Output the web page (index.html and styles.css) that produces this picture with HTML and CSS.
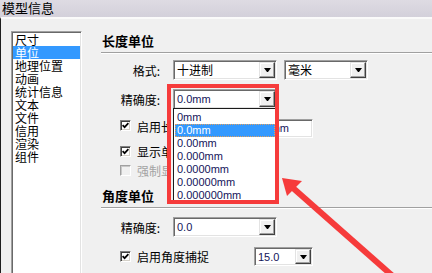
FILE: index.html
```html
<!DOCTYPE html>
<html lang="zh-CN">
<head>
  <meta charset="UTF-8">
  <meta name="viewport" content="width=device-width, initial-scale=1.0">
  <title>模型信息</title>
  <link rel="stylesheet" href="styles.css">
</head>
<body>
  <div class="titlebar">模型信息</div>
  <div class="dialog">
    <div class="sidebar">
      <ul class="navlist">
        <li>尺寸</li>
        <li class="active">单位</li>
        <li>地理位置</li>
        <li>动画</li>
        <li>统计信息</li>
        <li>文本</li>
        <li>文件</li>
        <li>信用</li>
        <li>渲染</li>
        <li>组件</li>
      </ul>
    </div>

    <div class="main">
      <h2 class="section-title">长度单位</h2>
      <div class="form-row row-format">
        <label class="field-label">格式:</label>
        <div class="combo combo-wide"><span class="combo-value">十进制</span><span class="combo-btn"></span></div>
        <div class="combo combo-unit"><span class="combo-value">毫米</span><span class="combo-btn"></span></div>
      </div>
      <div class="form-row row-precision">
        <label class="field-label">精确度:</label>
        <div class="combo combo-wide">
          <span class="combo-value latin">0.0mm</span><span class="combo-btn"></span>
          <ul class="dropdown latin">
            <li>0mm</li>
            <li class="selected">0.0mm</li>
            <li>0.00mm</li>
            <li>0.000mm</li>
            <li>0.0000mm</li>
            <li>0.00000mm</li>
            <li>0.000000mm</li>
          </ul>
        </div>
      </div>
      <div class="check-row row-snap">
        <span class="checkbox checked"><svg width="7" height="7" viewBox="0 0 7 7"><polyline points="0.6,3.2 2.6,5.2 6.4,1.2" fill="none" stroke="#000" stroke-width="1.7"/></svg></span>
        <span class="check-text covered">启用长度捕捉</span>
        <div class="textbox latin"><span class="textbox-value">mm</span></div>
      </div>
      <div class="check-row row-suffix">
        <span class="checkbox checked"><svg width="7" height="7" viewBox="0 0 7 7"><polyline points="0.6,3.2 2.6,5.2 6.4,1.2" fill="none" stroke="#000" stroke-width="1.7"/></svg></span>
        <span class="check-text covered">显示单位格式</span>
      </div>
      <div class="check-row row-force">
        <span class="checkbox disabled"></span>
        <span class="check-text covered disabled-text">强制显示单位</span>
      </div>

      <h2 class="section-title section-angle">角度单位</h2>
      <div class="form-row row-angle">
        <label class="field-label">精确度:</label>
        <div class="combo combo-wide"><span class="combo-value latin">0.0</span><span class="combo-btn"></span></div>
      </div>
      <div class="check-row row-angle-snap">
        <span class="checkbox checked"><svg width="7" height="7" viewBox="0 0 7 7"><polyline points="0.6,3.2 2.6,5.2 6.4,1.2" fill="none" stroke="#000" stroke-width="1.7"/></svg></span>
        <span class="check-text">启用角度捕捉</span>
        <div class="combo combo-small"><span class="combo-value latin">15.0</span><span class="combo-btn"></span></div>
      </div>
    </div>
  </div>

  <!-- 标注 -->
  <div class="callout-box"></div>
  <svg class="callout-arrow" width="432" height="273" viewBox="0 0 432 273">
    <line x1="293" y1="188" x2="404" y2="286" stroke="#f63b3b" stroke-width="6"/>
    <polygon points="282,178 302,181 287,196" fill="#f63b3b"/>
  </svg>
</body>
</html>
```

FILE: styles.css
```css
* {
  margin: 0;
  padding: 0;
  box-sizing: border-box;
}

body {
  width: 432px;
  height: 273px;
  overflow: hidden;
  position: relative;
  background: #f0f0f0;
  font-family: "Noto Sans CJK SC", "Liberation Sans", sans-serif;
  font-size: 12px;
  color: #000;
}

.titlebar {
  height: 17px;
  padding-left: 2px;
  font-size: 13px;
  line-height: 15px;
  background: linear-gradient(#dedbe3, #d3d0da);
}

.dialog {
  display: flex;
  height: 256px;
  border-top: 2px solid #fafafa;
  border-left: 1px solid #1e1e1e;
}

.sidebar {
  width: 81px;
  padding: 12px 0 0 10px;
}

.navlist {
  list-style: none;
  width: 71px;
  height: 260px;
  padding: 1px;
  background: #fff;
  border: 1px solid;
  border-color: #a0a0a0 #fff #fff #a0a0a0;
  box-shadow: inset 1px 1px 0 #696969, inset -1px -1px 0 #e3e3e3;
}

.navlist li {
  height: 13px;
  line-height: 13px;
  padding-left: 2px;
}

.navlist li.active {
  background: #3399ff;
  color: #fff;
}

.main {
  flex: 1;
  padding: 14px 0 0 19px;
}

.section-title {
  font-size: 13px;
  font-weight: bold;
  line-height: 16px;
  padding: 0 0 3px 1px;
  border-bottom: 1px solid #a0a0a0;
  box-shadow: 0 1px 0 #fff;
}

.section-angle {
  margin-top: 10px;
}

.latin {
  font-family: "Liberation Sans", Arial, sans-serif;
  font-size: 11px;
  color: #14145a;
}

.form-row {
  display: flex;
  align-items: center;
  height: 20px;
}

.row-format {
  margin-top: 7px;
}

.row-precision,
.row-angle {
  margin-top: 9px;
}

.field-label {
  width: 59px;
  margin-right: 13px;
  text-align: right;
}

.combo {
  position: relative;
  display: flex;
  align-items: center;
  height: 20px;
  padding-left: 3px;
  background: #fff;
  border: 1px solid;
  border-color: #a0a0a0 #fff #fff #a0a0a0;
  box-shadow: inset 1px 1px 0 #696969, inset -1px -1px 0 #e3e3e3;
}

.combo-wide {
  width: 104px;
}

.combo-unit {
  width: 84px;
  margin-left: 7px;
}

.combo-small {
  width: 59px;
  height: 19px;
}

.combo-value {
  flex: 1;
  line-height: 14px;
}

.combo-btn {
  width: 16px;
  height: 16px;
  margin-right: 1px;
  display: flex;
  align-items: center;
  justify-content: center;
  background: #f0f0f0;
  border: 1px solid;
  border-color: #e3e3e3 #404040 #404040 #e3e3e3;
  box-shadow: inset -1px -1px 0 #a0a0a0, inset 1px 1px 0 #fff;
}

.combo-small .combo-btn {
  height: 15px;
}

.combo-btn::after {
  content: '';
  width: 1px;
  height: 0;
  border-left: 3px solid transparent;
  border-right: 3px solid transparent;
  border-top: 4px solid #000;
}

.dropdown {
  position: absolute;
  top: 100%;
  left: -1px;
  right: -1px;
  z-index: 2;
  list-style: none;
  padding: 2px 1px 0;
  background: #fff;
  border: 1px solid #1a1a1a;
}

.dropdown li {
  height: 13px;
  line-height: 13px;
  padding-left: 2px;
}

.dropdown li.selected {
  background: #3399ff;
  color: #fff;
  outline: 1px dotted #e0a060;
  outline-offset: -1px;
}

.check-row {
  display: flex;
  align-items: center;
  height: 15px;
  padding-left: 19px;
}

.row-snap {
  margin-top: 10px;
  height: 20px;
  align-items: flex-start;
}

.row-snap .checkbox {
  margin-top: 1px;
}

.row-suffix {
  margin-top: 5px;
}

.row-force {
  margin-top: 4px;
}

.row-angle-snap {
  margin-top: 10px;
  height: 19px;
}

.checkbox {
  width: 11px;
  height: 11px;
  margin-right: 6px;
  display: flex;
  align-items: center;
  justify-content: center;
  background: #fff;
  border: 1px solid;
  border-color: #808080 #fff #fff #808080;
  box-shadow: inset 1px 1px 0 #404040, inset -1px -1px 0 #d4d0c8;
}

.checkbox.disabled {
  background: #f0f0f0;
  border-color: #a0a0a0 #fff #fff #a0a0a0;
  box-shadow: inset 1px 1px 0 #c8c8c8;
}

.check-text {
  width: 117px;
  line-height: 15px;
  white-space: nowrap;
  overflow: hidden;
}

/* 被下拉列表挡住的文字 */
.check-text.covered {
  width: 30px;
  margin-right: 87px;
}

.disabled-text {
  color: #a3a3a3;
}

.textbox {
  width: 59px;
  height: 19px;
  padding-right: 23px;
  line-height: 17px;
  text-align: right;
  background: #fff;
  border: 1px solid;
  border-color: #a0a0a0 #fff #fff #a0a0a0;
  box-shadow: inset 1px 1px 0 #696969, inset -1px -1px 0 #e3e3e3;
}

.callout-box {
  position: absolute;
  left: 167px;
  top: 84px;
  width: 112px;
  height: 120px;
  z-index: 3;
  border: 4px solid #f63b3b;
}

.callout-arrow {
  position: absolute;
  left: 0;
  top: 0;
  z-index: 4;
}
```
